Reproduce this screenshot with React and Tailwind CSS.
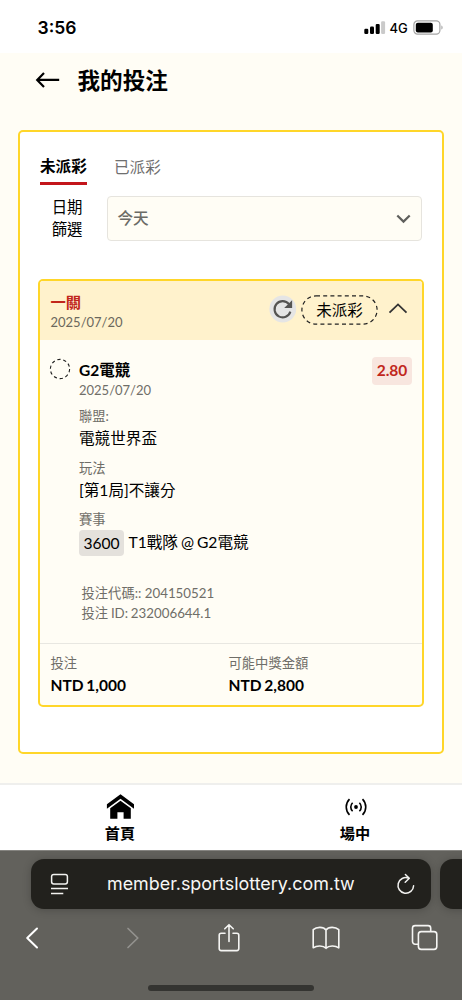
import React from "react";

const LATO = "font-['Lato','Noto_Sans_CJK_TC',sans-serif]";

function StatusBar() {
  return (
    <div className="flex h-[53px] items-start bg-white pl-[37.5px] pr-[18px] font-['Inter',sans-serif] text-black">
      <span className="mt-[16px] text-[17.5px] font-semibold leading-6">3:56</span>
      <svg className="ml-auto mt-[20px]" width="22" height="15" viewBox="0 0 22 15">
        <rect x="0.3" y="8.8" width="4" height="5.2" rx="1.2" />
        <rect x="6" y="6.5" width="4" height="7.5" rx="1.2" />
        <rect x="11.7" y="3.9" width="4" height="10.1" rx="1.2" />
        <rect x="17.1" y="1.2" width="4" height="12.8" rx="1.2" fill="#cacaca" />
      </svg>
      <span className="ml-[3.5px] mt-[18px] w-[19.5px] text-[13px] font-medium leading-5">4G</span>
      <svg className="ml-[4px] mt-[20px]" width="31" height="15" viewBox="0 0 31 15">
        <rect x="0.9" y="0.9" width="26" height="13.2" rx="3.6" fill="#fff" stroke="#a5a5a5" strokeWidth="1.2" />
        <rect x="2.8" y="2.8" width="17" height="9.6" rx="2" />
        <path d="M28.4 5.5c1.6.5 1.6 3.6 0 4.1z" fill="#a5a5a5" />
      </svg>
    </div>
  );
}

function Header() {
  return (
    <header className="flex h-[77px] items-start pl-[35px] pt-[12px]">
      <svg className="mt-[7px]" width="26" height="17" viewBox="0 0 26 17" fill="none" stroke="#000" strokeWidth="2.2">
        <path d="M24.2 7.9H2.5M9 .9 2.2 7.9 9 14.9" />
      </svg>
      <h1 className="ml-[16.5px] mt-[1px] text-[22.6px] font-bold leading-[30px]">我的投注</h1>
    </header>
  );
}

function Field({ label, children }) {
  return (
    <div className="mb-[7.2px]">
      <div className="text-[13.3px] leading-[20px] text-[#6f6e68]">{label}</div>
      <div className="flex h-[24px] items-center text-[15.6px] leading-[24px]">{children}</div>
    </div>
  );
}

function BetCard() {
  return (
    <section className="mt-[38px] h-[428px] w-[386px] overflow-hidden rounded-[5px] border-2 border-[#ffd629] bg-[#fffdf5]">
      <div className="flex h-[59px] bg-[#fff2cc] pl-[10.5px]">
        <div className="w-[218px] pt-[10px]">
          <div className="text-[15.3px] font-bold leading-[22px] text-[#c1271c]">一關</div>
          <div className="text-[13px] leading-[18px] text-[#6b685d]">2025/07/20</div>
        </div>
        <svg className="mt-[14px] shrink-0" width="28" height="28" viewBox="0 0 28 28">
          <circle cx="13.8" cy="14" r="13.4" fill="#e5e5e5" />
          <path d="M20 9.2A8.1 8.1 0 1 0 21.4 16.6" fill="none" stroke="#555452" strokeWidth="2.1" />
          <path d="M23.1 5.2v7.9h-7.9z" fill="#555452" />
        </svg>
        <div className="relative ml-[4.5px] mt-[14px] flex h-[30px] w-[77px] items-center justify-center text-[15.5px]">
          <svg className="absolute inset-0" width="77" height="30" viewBox="0 0 77 30" fill="none">
            <rect x="0.9" y="0.9" width="75.2" height="28.2" rx="14.1" stroke="#222" strokeWidth="1.2" strokeDasharray="4 3.2" />
          </svg>
          <span className="mt-[1px]">未派彩</span>
        </div>
        <svg className="ml-[10px] mt-[21px]" width="20" height="12" viewBox="0 0 20 12" fill="none" stroke="#333" strokeWidth="1.8">
          <path d="M1.5 10.7 10 2.4l8.5 8.3" />
        </svg>
      </div>
      <div className="flex h-[304px] border-b-[1.5px] border-[#e8e7e1] pl-[9px] pr-[10px]">
        <svg className="mt-[18px] shrink-0" width="22" height="22" viewBox="0 0 22 22" fill="none">
          <circle cx="11" cy="11" r="9.6" stroke="#222" strokeWidth="1.1" strokeDasharray="3.3 2.73" />
        </svg>
        <div className="ml-[8px] grow pt-[19px]">
          <div className="text-[15.5px] font-bold leading-[22px]">G2電競</div>
          <div className="mb-[7.4px] text-[13px] leading-[18px] text-[#6f6e68]">2025/07/20</div>
          <Field label="聯盟:">電競世界盃</Field>
          <Field label="玩法">[第1局]不讓分</Field>
          <Field label="賽事">
            <span className="mr-[4.5px] mt-[4px] flex h-[26px] w-[45px] shrink-0 items-center justify-center rounded-[4px] bg-[#e4e1dc]">3600</span>
            <span className="mt-[3px] whitespace-nowrap [word-spacing:-1px]">T1戰隊 @ G2電競</span>
          </Field>
          <div className="mt-[30.4px] pl-[2.5px] text-[13.3px] leading-[20px] text-[#6f6e68]">
            <div>投注代碼:: 204150521</div>
            <div className="[word-spacing:-0.6px]">投注 ID: 232006644.1</div>
          </div>
        </div>
        <div className="mt-[16.5px] flex h-[28px] w-[40px] items-center justify-center rounded-[4px] bg-[#f8e6df] text-[15.5px] font-bold text-[#c1271c]">2.80</div>
      </div>
      <div className="flex pl-[10.5px] pt-[9px]">
        <div className="w-[178px]">
          <div className="text-[13.3px] leading-[20px] text-[#6f6e68]">投注</div>
          <div className="text-[15.5px] font-bold leading-[24px] [word-spacing:-1px]">NTD 1,000</div>
        </div>
        <div>
          <div className="text-[13.3px] leading-[20px] text-[#6f6e68]">可能中獎金額</div>
          <div className="text-[15.5px] font-bold leading-[24px] [word-spacing:-1px]">NTD 2,800</div>
        </div>
      </div>
    </section>
  );
}

function BottomNav() {
  return (
    <nav className="flex h-[67px] border-t-2 border-[#efefed] bg-white text-[15.2px] font-bold">
      <div className="ml-[90px] flex w-[60px] flex-col items-center">
        <svg className="mt-[9px]" width="28" height="26" viewBox="0 0 28 26">
          <path d="M.9 10.2 14.5.2l13.5 10v4.5L14.5 4.8.9 14.7z" />
          <path d="M4.2 14.2 14.5 6.8l10.3 7.4v10.6h-7.2v-6.6h-6.2v6.6H4.2z" />
        </svg>
        <span className="mt-[1px] leading-[24px]">首頁</span>
      </div>
      <div className="ml-[175px] flex w-[60px] flex-col items-center">
        <svg className="ml-[2px] mt-[12.5px]" width="22" height="18" viewBox="0 0 22 18" fill="none" stroke="#000" strokeWidth="1.6">
          <circle cx="11" cy="9" r="1.9" fill="#000" stroke="none" />
          <path d="M7.6 4.7a6 6 0 0 0 0 8.6M14.4 4.7a6 6 0 0 1 0 8.6M4.5 1.1a11.2 11.2 0 0 0 0 15.8M17.5 1.1a11.2 11.2 0 0 1 0 15.8" />
        </svg>
        <span className="mt-[5.5px] leading-[24px]">場中</span>
      </div>
    </nav>
  );
}

function BrowserBar() {
  return (
    <footer className="h-[150px] overflow-hidden border-t border-[#858480] bg-[#62615c]">
      <div className="flex pl-[31px] pt-[8px]">
        <div className="flex h-[50px] w-[400px] shrink-0 items-center rounded-[13px] bg-[#22211d] shadow-[0_1px_8px_rgba(0,0,0,0.22)]">
          <svg className="ml-[19px]" width="20" height="23" viewBox="0 0 20 23" fill="none" stroke="#f2f2f0" strokeWidth="1.5">
            <rect x="1.6" y="1.4" width="15.8" height="9.6" rx="2.2" />
            <path d="M1 15.4h17M1 20.4h12.3" />
          </svg>
          <span className="ml-[37px] mt-[1px] w-[250px] whitespace-nowrap font-['Inter',sans-serif] text-[17.9px] text-[#f7f7f5]">member.sportslottery.com.tw</span>
          <svg className="ml-[39px]" width="20" height="23" viewBox="0 0 20 23" fill="none" stroke="#f2f2f0" strokeWidth="1.5" strokeLinecap="round" strokeLinejoin="round">
            <path d="M17.6 12.7A7.8 7.8 0 1 1 12.5 5.1M9.4 1.5l3.9 3.8-4.1 3.9" />
          </svg>
        </div>
        <div className="ml-[9px] h-[50px] w-[60px] shrink-0 rounded-[13px] bg-[#22211d] shadow-[0_1px_8px_rgba(0,0,0,0.22)]" />
      </div>
      <div className="mt-[0.5px] flex h-[56px] items-center pl-[25px] pr-[24px]">
        <svg width="14" height="22" viewBox="0 0 14 22" fill="none" stroke="#fff" strokeWidth="2" strokeLinecap="round" strokeLinejoin="round">
          <path d="M12 1.5 2.2 11l9.8 9.5" />
        </svg>
        <svg className="ml-[87px]" width="14" height="22" viewBox="0 0 14 22" fill="none" stroke="#93928e" strokeWidth="1.7" strokeLinecap="round" strokeLinejoin="round">
          <path d="M2 1.5 11.8 11 2 20.5" />
        </svg>
        <svg className="ml-[76.5px]" width="24" height="30" viewBox="0 0 24 30" fill="none" stroke="#f5f5f3" strokeWidth="1.6" strokeLinecap="round" strokeLinejoin="round">
          <path d="M8 10.2H4.2a2 2 0 0 0-2 2v13.4a2 2 0 0 0 2 2h15.6a2 2 0 0 0 2-2V12.2a2 2 0 0 0-2-2H16M12 18.5V2M7.8 5.8 12 1.7l4.2 4.1" />
        </svg>
        <svg className="ml-[71.5px]" width="28" height="24" viewBox="0 0 28 24" fill="none" stroke="#f5f5f3" strokeWidth="1.6" strokeLinejoin="round">
          <path d="M14 4C11.5.4 4.5.6 1.2 3.7v18.1c3.5-2.5 10-2.6 12.8.5 2.8-3.1 9.3-3 12.8-.5V3.7C23.5.6 16.5.4 14 4zM14 4v18.3" />
        </svg>
        <svg className="ml-[70.5px]" width="27" height="27" viewBox="0 0 27 27" fill="none" stroke="#f5f5f3" strokeWidth="1.6">
          <rect x="7.4" y="7.6" width="18.4" height="17.8" rx="2.8" />
          <path d="M7.4 20.2H4.1a2.6 2.6 0 0 1-2.6-2.6V4.2a2.6 2.6 0 0 1 2.6-2.6h13a2.6 2.6 0 0 1 2.6 2.6v3.4" />
        </svg>
      </div>
      <div className="ml-[148px] mt-[19.5px] h-[6px] w-[166px] rounded-full bg-[#343431]" />
    </footer>
  );
}

export default function App() {
  return (
    <div className={`h-[1000px] w-[462px] overflow-hidden bg-[#fffdf5] text-black ${LATO}`}>
      <StatusBar />
      <Header />
      <main className="ml-[18px] h-[624px] w-[426px] rounded-[5px] border-2 border-[#ffd629] bg-white pl-[18px]">
        <div className="flex pl-[2px] pt-[21px]">
          <div className="h-[32px] w-[47px] whitespace-nowrap border-b-[3.5px] border-[#c3151b] text-[15.6px] font-bold leading-[27px]">未派彩</div>
          <div className="ml-[27px] text-[15.6px] leading-[29px] text-[#6f6f6f]">已派彩</div>
        </div>
        <div className="mt-[11px] flex">
          <div className="w-[44.5px] text-right text-[15.4px] leading-[22.3px]">
            <div>日期</div>
            <div>篩選</div>
          </div>
          <div className="ml-[24.5px] flex h-[45px] w-[315px] items-center justify-between rounded-[4px] border border-[#e6e4de] bg-[#fffdf5] pl-[9.5px] pr-[10px]">
            <span className="text-[15.6px] font-medium text-[#6b6b66]">今天</span>
            <svg width="15" height="10" viewBox="0 0 15 10" fill="none" stroke="#5f5f5c" strokeWidth="2.2">
              <path d="M1.3 1.5 7.5 7.6l6.2-6.1" />
            </svg>
          </div>
        </div>
        <BetCard />
      </main>
      <div className="h-[29px]" />
      <BottomNav />
      <BrowserBar />
    </div>
  );
}
